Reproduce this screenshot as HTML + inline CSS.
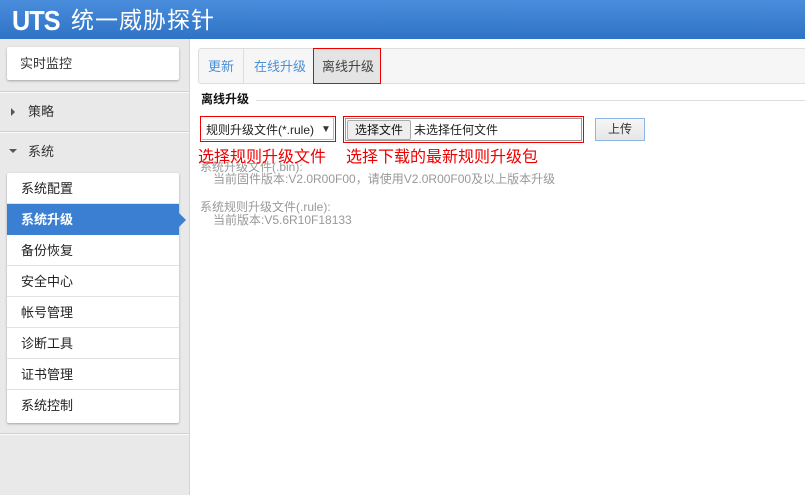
<!DOCTYPE html><html><head><meta charset="utf-8"><style>
*{margin:0;padding:0;box-sizing:border-box}
body{width:805px;height:495px;overflow:hidden;font-family:"Liberation Sans","Noto Sans CJK SC",sans-serif;font-size:12px;color:#333;background:#fff;position:relative;line-height:1}
.a{position:absolute}
#hd{left:0;top:0;width:805px;height:39px;background:linear-gradient(#4a8ddc,#2f73c6);color:#fff}
#sb{left:0;top:39px;width:190px;height:456px;background:#e9e9e9;border-right:1px solid #d5d5d5}
.card{background:#fff;box-shadow:0 1px 2px rgba(0,0,0,.3);border-radius:2px}
.it{position:absolute;left:7px;width:172px;height:31px;line-height:31px;padding-left:14px;font-size:13px;border-bottom:1px solid #e2e2e2;color:#222}
.g{color:#999;font-size:12px;position:absolute}
</style></head><body>
<div class="a" id="hd"><span class="a" style="left:12px;top:7px;font-size:28px;font-weight:bold;letter-spacing:-1px;transform:scaleX(.9);transform-origin:left">UTS</span><span class="a" style="left:71px;top:9px;font-size:23px;letter-spacing:1px">统一威胁探针</span></div>
<div class="a" id="sb"></div>
<div class="a card" style="left:7px;top:47px;width:172px;height:33px;line-height:33px;padding-left:13px;font-size:13px">实时监控</div>
<div class="a" style="left:0;top:91px;width:189px;border-top:1px solid #d0d0d0;border-bottom:1px solid #fafafa"></div>
<div class="a" style="left:11px;top:108px;width:0;height:0;border-left:4px solid #555;border-top:4px solid transparent;border-bottom:4px solid transparent"></div>
<div class="a" style="left:28px;top:105px;font-size:13px">策略</div>
<div class="a" style="left:0;top:131px;width:189px;border-top:1px solid #d0d0d0;border-bottom:1px solid #fafafa"></div>
<div class="a" style="left:9px;top:149px;width:0;height:0;border-top:4px solid #555;border-left:4px solid transparent;border-right:4px solid transparent"></div>
<div class="a" style="left:28px;top:145px;font-size:13px">系统</div>
<div class="a card" style="left:7px;top:173px;width:172px;height:250px"></div>
<div class="it" style="top:173px">系统配置</div>
<div class="it" style="top:204px;background:#3a7fd2;color:#fff;font-weight:bold;border:none">系统升级</div>
<div class="a" style="left:179px;top:213px;width:0;height:0;border-left:7px solid #3a7fd2;border-top:7px solid transparent;border-bottom:7px solid transparent"></div>
<div class="it" style="top:235px">备份恢复</div>
<div class="it" style="top:266px">安全中心</div>
<div class="it" style="top:297px">帐号管理</div>
<div class="it" style="top:328px">诊断工具</div>
<div class="it" style="top:359px">证书管理</div>
<div class="it" style="top:390px;border:none">系统控制</div>
<div class="a" style="left:0;top:433px;width:189px;border-top:1px solid #d0d0d0;border-bottom:1px solid #fafafa"></div>

<div class="a" style="left:198px;top:48px;width:610px;height:36px;background:#f6f6f6;border:1px solid #ddd;border-radius:3px"></div>
<div class="a" style="left:243px;top:49px;height:34px;border-left:1px solid #ddd"></div>
<div class="a" style="left:208px;top:60px;font-size:13px;color:#4a90d9">更新</div>
<div class="a" style="left:254px;top:60px;font-size:13px;color:#4a90d9">在线升级</div>
<div class="a" style="left:313px;top:48px;width:68px;height:36px;background:#e4e4e4;border:1px solid #e00"></div>
<div class="a" style="left:322px;top:60px;font-size:13px;color:#444">离线升级</div>
<div class="a" style="left:201px;top:93px;font-size:12px;font-weight:bold;color:#111">离线升级</div>
<div class="a" style="left:256px;top:100px;width:549px;border-top:1px solid #ddd"></div>
<div class="a" style="left:200px;top:116px;width:136px;height:26px;border:1px solid #e00;background:#fff"><div class="a" style="left:1px;top:1px;right:1px;bottom:1px;border:1px solid #9cc0ec;border-left:none;border-top:none"></div><span class="a" style="left:5px;top:7px;font-size:12px;color:#222">规则升级文件(*.rule)</span><span class="a" style="left:120px;top:8px;font-size:10px">▼</span></div>
<div class="a" style="left:343px;top:116px;width:241px;height:27px;border:1px solid #e00"><div class="a" style="left:1px;top:1px;right:1px;bottom:1px;border:1px solid #999"></div><div class="a" style="left:3px;top:3px;width:64px;height:20px;background:#eee;border:1px solid #aaa;border-radius:2px;text-align:center;line-height:18px;font-size:12px;color:#111">选择文件</div><span class="a" style="left:70px;top:7px;font-size:12px;color:#222">未选择任何文件</span></div>
<div class="a" style="left:595px;top:118px;width:50px;height:23px;background:linear-gradient(#f6f6f6,#e6e6e6);border:1px solid #8eb6e4;text-align:center;line-height:21px;font-size:12px">上传</div>
<div class="g" style="left:200px;top:161px">系统升级文件(.bin):</div>
<div class="a" style="left:198px;top:150px;font-size:16px;color:#e00">选择规则升级文件</div>
<div class="a" style="left:346px;top:150px;font-size:16px;color:#e00">选择下载的最新规则升级包</div>
<div class="g" style="left:213px;top:173px">当前固件版本:V2.0R00F00，请使用V2.0R00F00及以上版本升级</div>
<div class="g" style="left:200px;top:201px">系统规则升级文件(.rule):</div>
<div class="g" style="left:213px;top:214px">当前版本:V5.6R10F18133</div>
</body></html>
